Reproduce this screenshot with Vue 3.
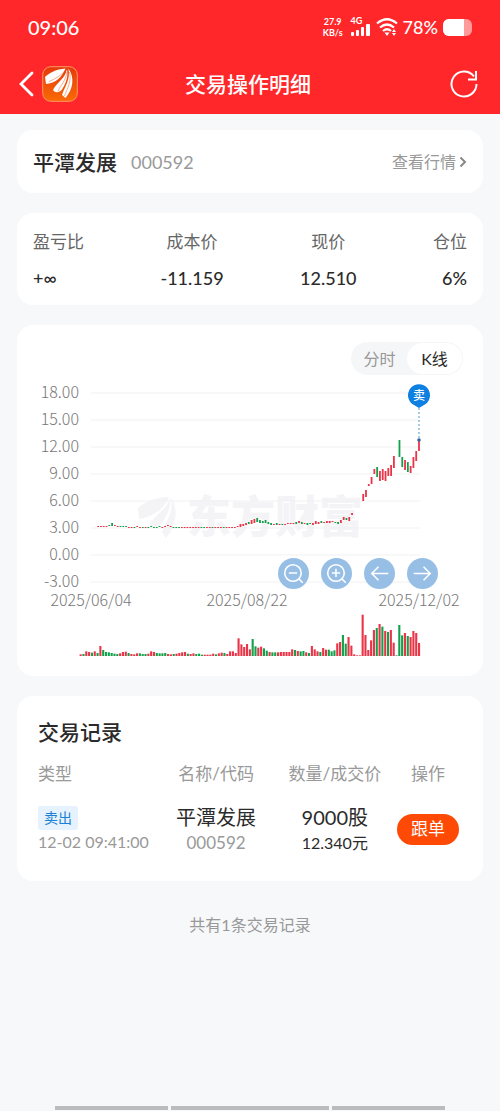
<script setup>
import { ref } from 'vue'

const mode = ref('k')

const stats = [
  { label: '盈亏比', value: '+∞' },
  { label: '成本价', value: '-11.159' },
  { label: '现价', value: '12.510' },
  { label: '仓位', value: '6%' },
]

const ticks = ['18.00', '15.00', '12.00', '9.00', '6.00', '3.00', '0.00', '-3.00'].map((label, i) => ({
  label,
  y: 13 + i * 27,
}))

// Volume series: direction and height in thirds of a unit
const volumeText =
  'r5 g6 r14 r12 g10 r14 g9 r30 g18 g12 g11 g9 g7 g6 r8 r12 r13 g9 r6 r5 r8 g8 g6 g6 r7 r14 r12 g9 g8 g8 g9 r6 r5 g6 r7 r9 r11 r12 g7 r6 r8 g6 g7 g4 r4 r4 r4 r7 g5 r8 r10 g9 r6 r14 r14 r9 ' +
  'r53 r35 r27 r36 r20 g51 g29 r25 r28 g23 g16 r12 g11 g11 r11 r12 r12 r12 r12 r20 g18 r15 g14 g15 r11 g9 r30 r20 r14 g12 r24 r19 g19 g14 g17 r38 r42 g63 g37 r57 r31 r5 r2 r2 r124 r63 r18 r47 r78 g84 r96 g88 r75 g72 r78 r40 g2 g93 g62 r69 g60 r57 r75 r69 r39'
const volumeList = volumeText.split(' ')
const volumes = volumeList.map((item, i) => {
  const h = Number(item.slice(1)) / 3
  return { x: 402 - (volumeList.length - 1 - i) * 2.82, y: 276 - h, h, up: item[0] === 'r' }
})

// Candles: direction, top and bottom
const flat = 'r146 r146 r146 r146 g145 g143 r145 r146 g146 g146 g146 r147 r147 g147 r146 r147 g147 r147 g147 g146 g147 g147 g146 r147 r146 r145 r146 g147 g147 g147 r147 r147 r147 r147 r147 r147 r147 g147 g147 r147 r147 g147 r147 r147 r147 g147 r147 r147 r147 r147 r146'
const early = flat.split(' ').map((s) => {
  const y = Number(s.slice(1))
  return [s[0], y, y + (y === 143 ? 3 : 1)]
})
const rise = [
  ['r', 144, 147], ['r', 144, 146], ['r', 143, 145], ['g', 142, 144], ['r', 140, 144], ['r', 139, 143], ['g', 138, 142], ['g', 140, 143],
  ['g', 141, 143], ['g', 140, 143], ['g', 142, 144], ['g', 143, 145], ['r', 144, 145], ['g', 143, 145], ['r', 144, 145], ['g', 144, 145],
  ['r', 144, 145], ['r', 143, 144], ['r', 143, 144], ['r', 143, 144], ['g', 142, 144], ['r', 141, 143], ['g', 142, 144], ['r', 143, 144],
  ['g', 143, 145], ['g', 143, 144], ['r', 143, 145], ['r', 141, 144], ['r', 142, 144], ['g', 141, 143], ['r', 142, 143], ['r', 141, 143],
  ['r', 141, 143], ['r', 141, 142], ['g', 142, 143], ['g', 142, 144], ['r', 140, 143], ['r', 137, 140], ['g', 138, 140], ['r', 137, 141],
  ['r', 133, 135], null, null, null,
  ['r', 114, 121], ['r', 110, 117], ['r', 104, 106], ['r', 97, 104], ['r', 89, 94], ['g', 87, 97], ['r', 91, 101],
  ['r', 89, 100], ['r', 91, 101], ['r', 88, 96], ['r', 85, 96], ['r', 76, 88], null, ['g', 60, 77], ['g', 77, 87],
  ['r', 80, 90], ['g', 82, 92], ['r', 86, 93], ['r', 77, 88], ['r', 71, 81], ['r', 61, 71],
]
const series = [...early, ...rise]
const candles = series
  .map((c, i) => c && { x: 402 - (series.length - 1 - i) * 2.79, y: c[1], h: c[2] - c[1], up: c[0] === 'r' })
  .filter(Boolean)
</script>

<template>
  <div class="page">
    <header class="header">
      <div class="status">
        <span class="clock">09:06</span>
        <div class="indicators">
          <span class="speed"><span>27.9</span><span>KB/s</span></span>
          <span class="signal">
            <span>4G</span>
            <svg viewBox="0 0 20 12" width="20" height="12" fill="#fff" aria-hidden="true">
              <rect x="0" y="8" width="3" height="4" rx="1" />
              <rect x="5" y="6" width="3" height="6" rx="1" />
              <rect x="10" y="3" width="3" height="9" rx="1" />
              <rect x="15" y="0" width="4" height="12" rx="1" />
            </svg>
          </span>
          <svg class="wifi" viewBox="0 0 22 18" width="22" height="18" aria-hidden="true">
            <g fill="none" stroke="#fff" stroke-width="2.2">
              <path d="M1 5.5Q11 -3 21 5.5" />
              <path d="M4 9.5Q11 3.5 18 9.5" />
              <path d="M7 13Q11 9.5 15 13" />
            </g>
            <path d="M8.5 14.5h5L11 18zM16 14l2-3 2 3zM16 15l2 3 2-3z" fill="#fff" />
          </svg>
          <span class="percent">78%</span>
          <svg class="battery" viewBox="0 0 29 17" width="29" height="17" aria-hidden="true">
            <rect width="29" height="17" rx="6" fill="#ff9a9a" />
            <path d="M6 0h15v17H6a6 6 0 0 1-6-6V6a6 6 0 0 1 6-6z" fill="#fff" />
          </svg>
        </div>
      </div>
      <div class="titlebar">
        <div class="side">
          <button class="plain" aria-label="返回">
            <svg viewBox="0 0 16 26" width="16" height="26" fill="none" stroke="#fff" stroke-width="2.8" aria-hidden="true">
              <path d="M14 2L3 13l11 11" stroke-linecap="round" />
            </svg>
          </button>
          <svg class="logo" viewBox="0 0 36 36" width="36" height="36" aria-hidden="true">
            <defs>
              <linearGradient id="logoFill" x1="0" y1="0" x2="0" y2="1">
                <stop offset="0" stop-color="#e43a0c" />
                <stop offset="1" stop-color="#fa6a05" />
              </linearGradient>
            </defs>
            <rect x=".7" y=".7" width="34.6" height="34.6" rx="8" fill="url(#logoFill)" stroke="#ff9a63" />
            <g fill="#fff">
              <path d="M23.500 2.500C14 3 6 8 3 11L4 18C12 17.500 20 12 23.500 2.500z" />
              <path d="M25 3C23 13 15 16 11 24C13 27 17 27 20 23.500C24 17 26.500 11 25 3z" />
              <path d="M26.500 2.500C28.500 14 23 20 20 29L23.500 32C31 23 33 12 26.500 2.500z" />
            </g>
            <path d="M23.500 4C20 9 13 13 7 15.500M25 6C24 14 19 19 16 25M27.500 6C30 15 25 23 22.500 30" fill="none" stroke="#ef5a1c" stroke-width=".5" />
          </svg>
        </div>
        <h1>交易操作明细</h1>
        <div class="side end">
          <button class="plain" aria-label="刷新">
            <svg viewBox="0 0 28 28" width="28" height="28" fill="none" stroke="#fff" stroke-width="2" aria-hidden="true">
              <path d="M26.500 14A12.500 12.500 0 1 1 24 6.500" />
              <path d="M26 1v8.500H18" />
            </svg>
          </button>
        </div>
      </div>
    </header>

    <main class="content">
      <section class="card stock">
        <h2>平潭发展</h2>
        <span class="code">000592</span>
        <a class="quote" href="#quote">查看行情<svg viewBox="0 0 8 12" width="8" height="12" fill="none" stroke="#888" stroke-width="2" aria-hidden="true"><path d="M1.500 1.500L6 6l-4.500 4.500" /></svg></a>
      </section>

      <dl class="card stats">
        <div v-for="s in stats" :key="s.label" class="stat">
          <dt>{{ s.label }}</dt>
          <dd>{{ s.value }}</dd>
        </div>
      </dl>

      <section class="card chart-card">
        <div class="tabs">
          <button :class="{ active: mode === 'time' }" @click="mode = 'time'">分时</button>
          <button :class="{ active: mode === 'k' }" @click="mode = 'k'">K线</button>
        </div>
        <div class="chart">
          <svg class="plot" viewBox="0 0 466 280" role="img" aria-label="K线图">
            <g class="watermark">
              <path d="M152 117C139 117 127 122 121 128L122 139C135 137 147 130 152 117z" />
              <path d="M153 118C150 130 138 134 132 145C136 149 142 147 145 143C151 134 154 127 153 118z" />
              <path d="M154 117C157 132 149 142 145 152L149 158C159 146 162 130 154 117z" />
              <text x="170" y="153">东方财富</text>
            </g>
            <g v-for="t in ticks" :key="t.label">
              <line x1="74" x2="403" :y1="t.y" :y2="t.y" class="grid" />
              <text x="62" :y="t.y + 5" text-anchor="end" class="axis">{{ t.label }}</text>
            </g>
            <rect v-for="(c, i) in candles" :key="'c' + i" :x="c.x - 0.9" :y="c.y" width="1.8" :height="c.h" :class="c.up ? 'up' : 'down'" />
            <rect v-for="(v, i) in volumes" :key="'v' + i" :x="v.x - 1" :y="v.y" width="2.1" :height="v.h" :class="v.up ? 'up' : 'down'" />
            <text x="74" y="226" text-anchor="middle" class="axis">2025/06/04</text>
            <text x="230" y="226" text-anchor="middle" class="axis">2025/08/22</text>
            <text x="402" y="226" text-anchor="middle" class="axis">2025/12/02</text>
            <path d="M402 28v30" class="guide" />
            <circle cx="402" cy="60" r="1.8" fill="#3a62a8" />
            <path d="M402 28l-5-3a11 11 0 1 1 10 0z" class="pin" />
            <text x="402" y="20" text-anchor="middle" class="pin-text">卖</text>
          </svg>
          <div class="tools">
            <button aria-label="缩小">
              <svg viewBox="0 0 30 30" aria-hidden="true"><circle cx="14.500" cy="14.500" r="8" /><path d="M10.500 14.500h8M20 20l4 4" /></svg>
            </button>
            <button aria-label="放大">
              <svg viewBox="0 0 30 30" aria-hidden="true"><circle cx="14.500" cy="14.500" r="8" /><path d="M10.500 14.500h8M14.500 10.500v8M20 20l4 4" /></svg>
            </button>
            <button aria-label="向左">
              <svg viewBox="0 0 30 30" aria-hidden="true"><path d="M23.500 15H8M14 8.500L7.500 15l6.500 6.500" /></svg>
            </button>
            <button aria-label="向右">
              <svg viewBox="0 0 30 30" aria-hidden="true"><path d="M6.500 15H22M16 8.500l6.500 6.500-6.500 6.500" /></svg>
            </button>
          </div>
        </div>
      </section>

      <section class="card records">
        <h2>交易记录</h2>
        <table>
          <thead>
            <tr><th>类型</th><th>名称/代码</th><th>数量/成交价</th><th>操作</th></tr>
          </thead>
          <tbody>
            <tr>
              <td><span class="tag">卖出</span><div class="when">12-02 09:41:00</div></td>
              <td><div class="main">平潭发展</div><div class="sub">000592</div></td>
              <td><div class="main">9000股</div><div class="price">12.340元</div></td>
              <td><button class="follow">跟单</button></td>
            </tr>
          </tbody>
        </table>
      </section>

      <p class="total">共有1条交易记录</p>
    </main>

    <div class="navbar"><i></i><i></i><i></i></div>
  </div>
</template>

<style>
body {
  margin: 0;
  background: #f7f8fa;
}
</style>

<style scoped>
.page {
  min-height: 100vh;
  display: flex;
  flex-direction: column;
  background: #f7f8fa;
  color: #2b2b2b;
  font-family: Lato, "Noto Sans CJK SC", sans-serif;
  font-size: 17px;
  line-height: 24px;
}
button {
  font: inherit;
  border: 0;
  padding: 0;
  cursor: pointer;
}
h1, h2, dl, dd, p {
  margin: 0;
}
.header {
  background: #ff272a;
  color: #fff;
}
.status {
  height: 54px;
  padding: 0 28px;
  display: flex;
  align-items: center;
  justify-content: space-between;
}
.clock {
  font-size: 20px;
  font-weight: 500;
}
.indicators {
  display: flex;
  align-items: center;
  gap: 5px;
}
.speed {
  display: flex;
  flex-direction: column;
  align-items: center;
  margin-right: 3px;
  font-size: 9px;
  font-weight: 700;
  line-height: 11px;
}
.signal {
  display: flex;
  flex-direction: column;
  font-size: 9px;
  font-weight: 700;
  line-height: 6px;
}
.percent {
  font-size: 18px;
  font-weight: 500;
}
.titlebar {
  height: 60px;
  padding: 0 22px 0 18px;
  display: flex;
  align-items: center;
}
.side {
  flex: 1;
  display: flex;
  align-items: center;
  gap: 8px;
}
.side svg {
  display: block;
}
.end {
  justify-content: flex-end;
}
.plain {
  background: none;
}
h1 {
  font-size: 21px;
  font-weight: 500;
}
.content {
  padding: 16px 17px 0;
  display: flex;
  flex-direction: column;
  gap: 20px;
}
.card {
  background: #fff;
  border-radius: 16px;
}
.stock {
  padding: 16px 16px 15px;
  display: flex;
  align-items: center;
  line-height: 32px;
}
h2 {
  font-size: 21px;
  font-weight: 500;
  line-height: 32px;
}
.code {
  margin-left: 14px;
  font-size: 18px;
  color: #999;
}
.quote {
  margin-left: auto;
  display: flex;
  align-items: center;
  gap: 3px;
  font-size: 16px;
  color: #999;
  text-decoration: none;
}
.stats {
  padding: 17px 16px 15px;
  display: flex;
  justify-content: space-between;
}
.stat {
  text-align: center;
}
.stat:first-child {
  text-align: left;
}
.stat:last-child {
  text-align: right;
}
dt {
  color: #666;
}
dd {
  margin-top: 12px;
  font-size: 18px;
  font-weight: 500;
}
.chart-card {
  padding: 17px 0 16px;
}
.tabs {
  width: 112px;
  height: 33px;
  margin: 0 20px 0 auto;
  padding: 1px;
  box-sizing: border-box;
  display: flex;
  border-radius: 17px;
  background: #f5f6f8;
}
.tabs button {
  flex: 1;
  border-radius: 16px;
  background: transparent;
  color: #999;
  font-size: 16px;
  line-height: 30px;
}
.tabs .active {
  background: #fff;
  color: #2b2b2b;
}
.chart {
  position: relative;
  margin-top: 5px;
}
.plot {
  display: block;
  width: 100%;
  height: auto;
  font-family: "Noto Sans CJK SC", sans-serif;
}
.grid {
  stroke: #f1f1f3;
  stroke-width: 1;
}
.axis {
  font-size: 16px;
  font-weight: 300;
  fill: #777;
}
.watermark {
  fill: #f4f4f6;
  font-size: 44px;
  font-weight: 900;
}
.up {
  fill: #ea3447;
}
.down {
  fill: #12a04b;
}
.guide {
  stroke: #4a9bc4;
  stroke-dasharray: 2 2;
}
.pin {
  fill: #0d80e2;
}
.pin-text {
  font-size: 12px;
  font-weight: 500;
  fill: #fff;
}
.tools {
  position: absolute;
  right: 45px;
  bottom: 71px;
  display: flex;
  gap: 12px;
}
.tools button {
  width: 31px;
  height: 31px;
  border-radius: 50%;
  background: #97bfe6;
}
.tools svg {
  display: block;
  width: 100%;
  height: 100%;
  fill: none;
  stroke: #fff;
  stroke-width: 1.5;
}
.records {
  padding: 20px 21px 26px;
}
table {
  width: 100%;
  margin-top: 14px;
  border-collapse: collapse;
  table-layout: fixed;
}
th, td {
  padding: 0;
  width: 28%;
  text-align: center;
}
th {
  font-weight: 400;
  color: #999;
  white-space: nowrap;
}
th:first-child, td:first-child {
  text-align: left;
}
th:last-child, td:last-child {
  width: 16%;
}
td {
  padding-top: 17px;
}
.tag {
  display: inline-block;
  padding: 0 6px;
  border-radius: 3px;
  background: #e6f2fd;
  color: #1b7fd6;
  font-size: 14px;
}
.when, .sub {
  color: #999;
  white-space: nowrap;
}
.when {
  font-size: 16px;
}
.main {
  font-size: 20px;
  line-height: 28px;
}
.price {
  font-size: 16px;
}
.follow {
  width: 62px;
  height: 31px;
  border-radius: 16px;
  background: #ff4a05;
  color: #fff;
}
.total {
  margin-top: 12px;
  text-align: center;
  font-size: 16px;
  color: #999;
}
.navbar {
  margin-top: auto;
  padding: 0 11% 1px;
  display: flex;
  gap: 3px;
}
.navbar i {
  flex: 113;
  height: 4px;
  background: #bbbcbe;
}
.navbar i:nth-child(2) {
  flex: 157;
}
</style>
